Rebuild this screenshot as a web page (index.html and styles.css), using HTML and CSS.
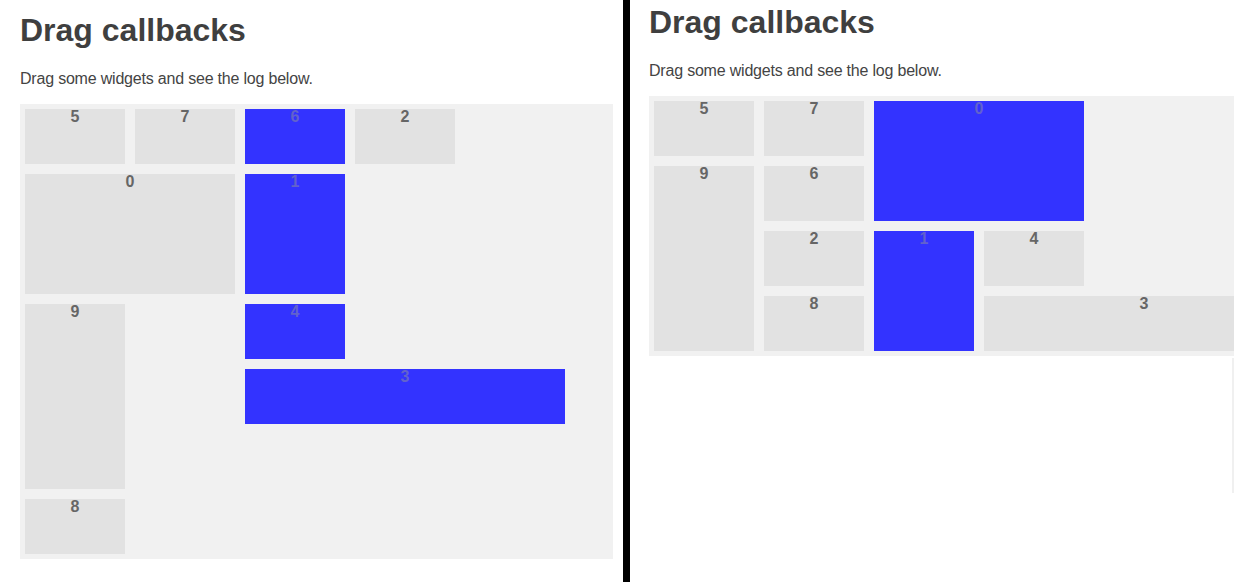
FILE: index.html
```html
<!DOCTYPE html>
<html>
<head>
<meta charset="utf-8">
<link rel="stylesheet" href="styles.css">
</head>
<body>
<div class="page">
  <section class="panel panel-left">
    <h1 class="title">Drag callbacks</h1>
    <p class="lead">Drag some widgets and see the log below.</p>
    <ul class="grid grid-left">
      <li class="w" style="grid-area:1/1/span 1/span 1">5</li>
      <li class="w" style="grid-area:1/2/span 1/span 1">7</li>
      <li class="w on" style="grid-area:1/3/span 1/span 1">6</li>
      <li class="w" style="grid-area:1/4/span 1/span 1">2</li>
      <li class="w" style="grid-area:2/1/span 2/span 2">0</li>
      <li class="w on" style="grid-area:2/3/span 2/span 1">1</li>
      <li class="w" style="grid-area:4/1/span 3/span 1">9</li>
      <li class="w on" style="grid-area:4/3/span 1/span 1">4</li>
      <li class="w on" style="grid-area:5/3/span 1/span 3">3</li>
      <li class="w" style="grid-area:7/1/span 1/span 1">8</li>
    </ul>
  </section>
  <div class="divider"></div>
  <section class="panel panel-right">
    <h1 class="title">Drag callbacks</h1>
    <p class="lead">Drag some widgets and see the log below.</p>
    <ul class="grid grid-right">
      <li class="w" style="grid-area:1/1/span 1/span 1">5</li>
      <li class="w" style="grid-area:1/2/span 1/span 1">7</li>
      <li class="w on" style="grid-area:1/3/span 2/span 2">0</li>
      <li class="w" style="grid-area:2/1/span 3/span 1">9</li>
      <li class="w" style="grid-area:2/2/span 1/span 1">6</li>
      <li class="w" style="grid-area:3/2/span 1/span 1">2</li>
      <li class="w on" style="grid-area:3/3/span 2/span 1">1</li>
      <li class="w" style="grid-area:3/4/span 1/span 1">4</li>
      <li class="w" style="grid-area:4/2/span 1/span 1">8</li>
      <li class="w" style="grid-area:4/4/span 1/span 3">3</li>
    </ul>
    <div class="log"></div>
  </section>
</div>
</body>
</html>
```

FILE: styles.css
```css
html, body {
  margin: 0;
  padding: 0;
  background: #fff;
}
body {
  font-family: "Liberation Sans", Arial, sans-serif;
  color: #444;
}
.page {
  display: flex;
  width: 1234px;
  height: 582px;
  overflow: hidden;
}
.panel {
  overflow: hidden;
  box-sizing: border-box;
}
.panel-left {
  width: 623px;
  flex: none;
  padding: 12px 0 0 20px;
}
.panel-right {
  flex: 1;
  min-width: 0;
  padding: 4px 0 0 19px;
}
.divider {
  width: 7px;
  flex: none;
  background: #000;
}
.title {
  margin: 0;
  font-size: 32px;
  font-weight: bold;
  line-height: 37px;
  color: #3f3f3f;
}
.lead {
  margin: 21px 0 0;
  font-size: 16px;
  line-height: 18px;
  letter-spacing: -0.2px;
  color: #444;
}
.grid {
  list-style: none;
  margin: 16px 0 0;
  padding: 5px;
  display: grid;
  grid-template-columns: repeat(6, 100px);
  grid-auto-rows: 55px;
  gap: 10px;
  background: #f1f1f1;
  box-sizing: border-box;
}
.grid-left {
  width: 593px;
}
.grid-right {
  width: 700px;
}
.w {
  background: #e2e2e2;
  text-align: center;
  font-size: 16px;
  font-weight: bold;
  line-height: 16px;
  color: #666;
}
.w.on {
  background: #3333ff;
  color: #6262cc;
}
.log {
  margin: 2px 0 0 583px;
  width: 100px;
  height: 135px;
  background: #f0f0f0;
}
```
